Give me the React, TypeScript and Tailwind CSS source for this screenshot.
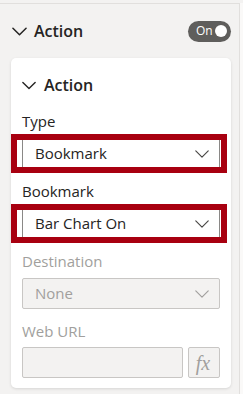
const font = { fontFamily: '"Open Sans", "Noto Sans", sans-serif' };

function Chevron({ className, width = 1.6 }: { className: string; width?: number }) {
  return (
    <svg viewBox="0 0 16 9" className={className} fill="none">
      <path d="M1 1l7 7 7-7" stroke="currentColor" strokeWidth={width} strokeLinecap="round" strokeLinejoin="round" />
    </svg>
  );
}

function Field({ label, value, highlight, disabled }: { label: string; value: string; highlight?: boolean; disabled?: boolean }) {
  return (
    <div>
      <div className={`h-[20px] text-[15px] leading-[20px] ${disabled ? "text-[#a19f9d]" : "text-[#252423]"}`}>{label}</div>
      <div className="relative mt-[7px]">
        <div
          className={`flex h-[31px] items-center justify-between rounded-[2px] border pl-[12px] pr-[9px] text-[15px] ${
            disabled ? "border-[#c8c6c4] bg-[#f3f2f1] text-[#a19f9d]" : "border-[#8a8886] bg-white text-[#252423]"
          }`}
        >
          <span>{value}</span>
          <Chevron width={1.3} className={`h-[8px] w-[16px] ${disabled ? "text-[#a19f9d]" : "text-[#484644]"}`} />
        </div>
        {highlight && (
          <div className="pointer-events-none absolute -top-[4px] -bottom-[4px] -left-[11px] -right-[7px] border-[6px] border-[#a80010]" />
        )}
      </div>
    </div>
  );
}

export default function App() {
  return (
    <div className="h-[394px] w-[243px] overflow-hidden bg-[#faf9f8]" style={font}>
      <div className="h-[3px] bg-[#f3f2f1]" />
      <div className="h-[391px] w-[240px] border-t border-r border-[#e1dfdd] bg-[#f3f2f1]">
        {/* HEADER */}
        <div className="flex h-[54px] items-center justify-between pl-[12px] pr-[8px]">
          <div className="flex items-center gap-[7px] text-[#252423]">
            <Chevron className="h-[9px] w-[15px]" />
            <span className="text-[16px] font-semibold leading-[22px]">Action</span>
          </div>
          <div className="flex h-[21px] w-[43px] items-center justify-between rounded-full bg-[#5f5e5c] pl-[8px] pr-[4px]">
            <span className="text-[12px] leading-none text-white">On</span>
            <span className="h-[12px] w-[12px] rounded-full bg-white" />
          </div>
        </div>

        {/* CARD */}
        <div className="ml-[11px] h-[330px] w-[220px] rounded-[5px] bg-white px-[11px] pt-[16px] shadow-[0_1px_3px_rgba(0,0,0,0.12)]">
          <div className="flex h-[22px] items-center gap-[8px] text-[#252423]">
            <Chevron className="h-[9px] w-[14px]" />
            <span className="text-[16px] font-semibold">Action</span>
          </div>
          <div className="mt-[15px] flex flex-col gap-[12px]">
            <Field label="Type" value="Bookmark" highlight />
            <Field label="Bookmark" value="Bar Chart On" highlight />
            <Field label="Destination" value="None" disabled />
            <div>
              <div className="h-[20px] text-[15px] leading-[20px] text-[#a19f9d]">Web URL</div>
              <div className="mt-[6px] flex gap-[5px]">
                <div className="h-[31px] w-[161px] rounded-[2px] border border-[#c8c6c4] bg-[#f3f2f1]" />
                <div
                  className="flex h-[31px] w-[32px] items-center justify-center rounded-[2px] border border-[#c8c6c4] bg-[#f3f2f1] pr-[2px] text-[20px] italic text-[#a19f9d]"
                  style={{ fontFamily: '"Liberation Serif", serif' }}
                >
                  fx
                </div>
              </div>
            </div>
          </div>
        </div>
      </div>
    </div>
  );
}
